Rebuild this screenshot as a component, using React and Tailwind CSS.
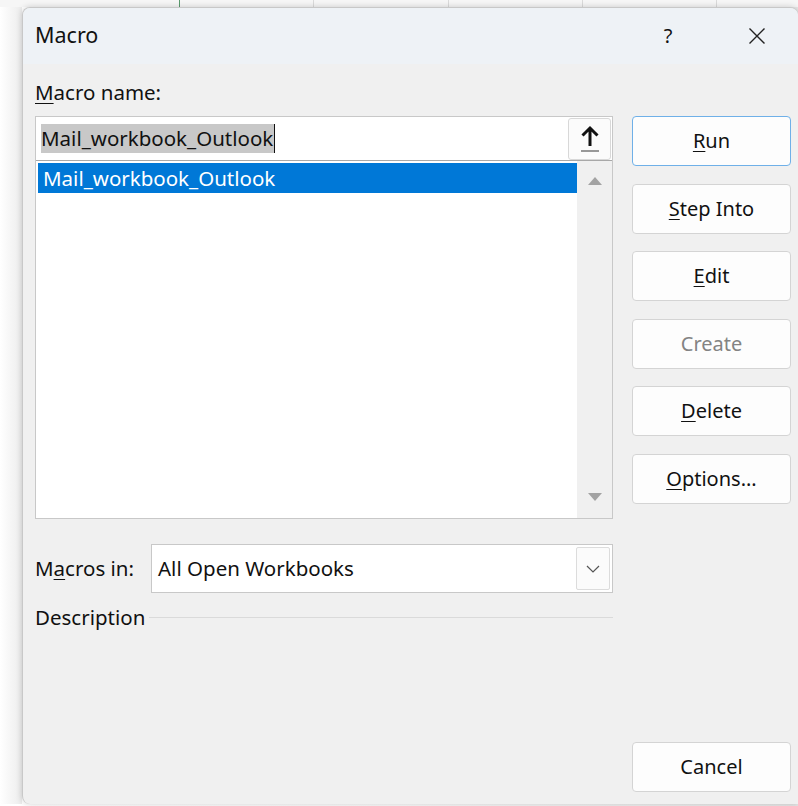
import React from "react";

const font = { fontFamily: '"Noto Sans", "Open Sans", sans-serif' };

function Btn({ children, className = "", disabled = false, primary = false }) {
  return (
    <div
      className={
        "h-[50px] w-[159px] rounded-[4px] border flex items-center justify-center text-[20px] " +
        (primary ? "border-[#6fb0e8] bg-[#fdfdfd] " : "border-[#d4d4d4] bg-[#fdfdfd] ") +
        (disabled ? "text-[#838383] " : "text-[#111] ") +
        className
      }
    >
      {children}
    </div>
  );
}

function U({ children }) {
  return <span className="underline underline-offset-[3px] decoration-[1px]">{children}</span>;
}

export default function App() {
  return (
    <div
      className="w-[798px] h-[806px] overflow-hidden relative bg-gradient-to-r from-[#ffffff] via-[#fafafa] to-[#e6e6e6]"
      style={font}
    >
      {/* sheet gridlines peeking above the window */}
      <div className="h-[7px] w-full bg-[#f6f6f6] flex">
        <div className="w-[180px] border-r border-[#5a9a6e]" />
        <div className="w-[134px] border-r border-[#dadada]" />
        <div className="w-[135px] border-r border-[#dadada]" />
        <div className="w-[134px] border-r border-[#dadada]" />
        <div className="w-[134px] border-r border-[#dadada]" />
      </div>

      <div className="flex">
        <div className="w-[22px] shrink-0 bg-gradient-to-r from-[#ffffff] to-[#ececec]" />
        <div className="w-[776px] h-[797px] shrink-0 rounded-t-[8px] rounded-bl-[8px] bg-[#f0f0f0] border-t border-l border-[#c8c8c8] overflow-hidden flex flex-col shadow-[0_0_6px_rgba(0,0,0,0.18)]">
          {/* title bar */}
          <div className="h-[56px] shrink-0 bg-[#eef2f6] flex items-center pl-[12px]">
            <span className="text-[21.5px] text-[#111] flex-1 -mt-[1px]">Macro</span>
            <span className="text-[20px] text-[#111] w-[20px] text-center -mt-[1px]">?</span>
            <div className="w-[70px]" />
            <svg width="18" height="18" viewBox="0 0 18 18" className="-mt-[1px]">
              <path d="M1.5 1.5 L16.5 16.5 M16.5 1.5 L1.5 16.5" stroke="#222" strokeWidth="1.4" fill="none" />
            </svg>
            <div className="w-[32px]" />
          </div>

          {/* body */}
          <div className="flex-1 flex pl-[12px] pr-[7px]">
            {/* left column */}
            <div className="w-[578px] flex flex-col">
              <div className="h-[52px] flex items-end pb-[8px] text-[20.5px] text-[#111]">
                <span><U>M</U>acro name:</span>
              </div>
              {/* name field + list */}
              <div className="border border-[#c8c8c8] bg-white">
                <div className="h-[44px] flex items-center border-b border-[#a8a8a8]">
                  <div className="flex-1 pl-[5px] flex items-center">
                    <span className="bg-[#c8c8c8] text-[20.5px] text-[#111] leading-[29px] pr-[1px]">Mail_workbook_Outlook</span>
                    <span className="w-[1px] h-[29px] bg-[#111]" />
                  </div>
                  <div className="w-[43px] h-[42px] mr-[1px] border border-[#d8d8d8] rounded-[3px] bg-[#fbfbfb] flex items-center justify-center">
                    <svg width="22" height="30" viewBox="0 0 22 30">
                      <path d="M11 22 L11 4 M3.5 11.5 L11 4 L18.5 11.5" stroke="#111" strokeWidth="3" fill="none" strokeLinejoin="miter" />
                      <path d="M2 27 L20 27" stroke="#777" strokeWidth="1.5" />
                    </svg>
                  </div>
                </div>
                <div className="h-[357px] flex">
                  <div className="flex-1 pt-[2px] pl-[1px]">
                    <div className="h-[30px] bg-[#0078d7] text-white text-[20.5px] flex items-center pl-[5px] ml-[1px]">
                      Mail_workbook_Outlook
                    </div>
                  </div>
                  <div className="w-[35px] bg-[#f0f0f0] flex flex-col items-center justify-between py-[15px]">
                    <svg width="14" height="9" viewBox="0 0 14 9">
                      <path d="M0 9 L7 1 L14 9 Z" fill="#a3a3a3" />
                    </svg>
                    <svg width="14" height="9" viewBox="0 0 14 9" className="mb-[1px]">
                      <path d="M0 0 L14 0 L7 8 Z" fill="#a3a3a3" />
                    </svg>
                  </div>
                </div>
              </div>

              {/* macros in */}
              <div className="mt-[25px] flex items-center">
                <span className="w-[116px] text-[20.5px] text-[#111]">M<U>a</U>cros in:</span>
                <div className="flex-1 h-[49px] border border-[#c8c8c8] bg-white flex items-center">
                  <span className="flex-1 pl-[6px] text-[20.5px] text-[#111]">All Open Workbooks</span>
                  <div className="w-[34px] h-[43px] mr-[2px] border border-[#dcdcdc] rounded-[2px] bg-[#fbfbfb] flex items-center justify-center">
                    <svg width="14" height="8" viewBox="0 0 14 8">
                      <path d="M1 1 L7 7 L13 1" stroke="#555" strokeWidth="1.2" fill="none" />
                    </svg>
                  </div>
                </div>
              </div>

              {/* description group */}
              <div className="mt-[9px] flex items-center">
                <span className="text-[20.5px] text-[#111]">Description</span>
                <div className="flex-1 h-[1px] bg-[#dadada] ml-[4px] mt-[1px]" />
              </div>
            </div>

            {/* right column */}
            <div className="ml-[19px] flex flex-col pt-[52px] pb-[12px]">
              <div className="flex flex-col gap-[17.5px]">
                <Btn primary><span><U>R</U>un</span></Btn>
                <Btn><span><U>S</U>tep Into</span></Btn>
                <Btn><span><U>E</U>dit</span></Btn>
                <Btn disabled>Create</Btn>
                <Btn><span><U>D</U>elete</span></Btn>
                <Btn><span><U>O</U>ptions...</span></Btn>
              </div>
              <div className="flex-1" />
              <Btn>Cancel</Btn>
            </div>
          </div>
        </div>
      </div>
    </div>
  );
}
